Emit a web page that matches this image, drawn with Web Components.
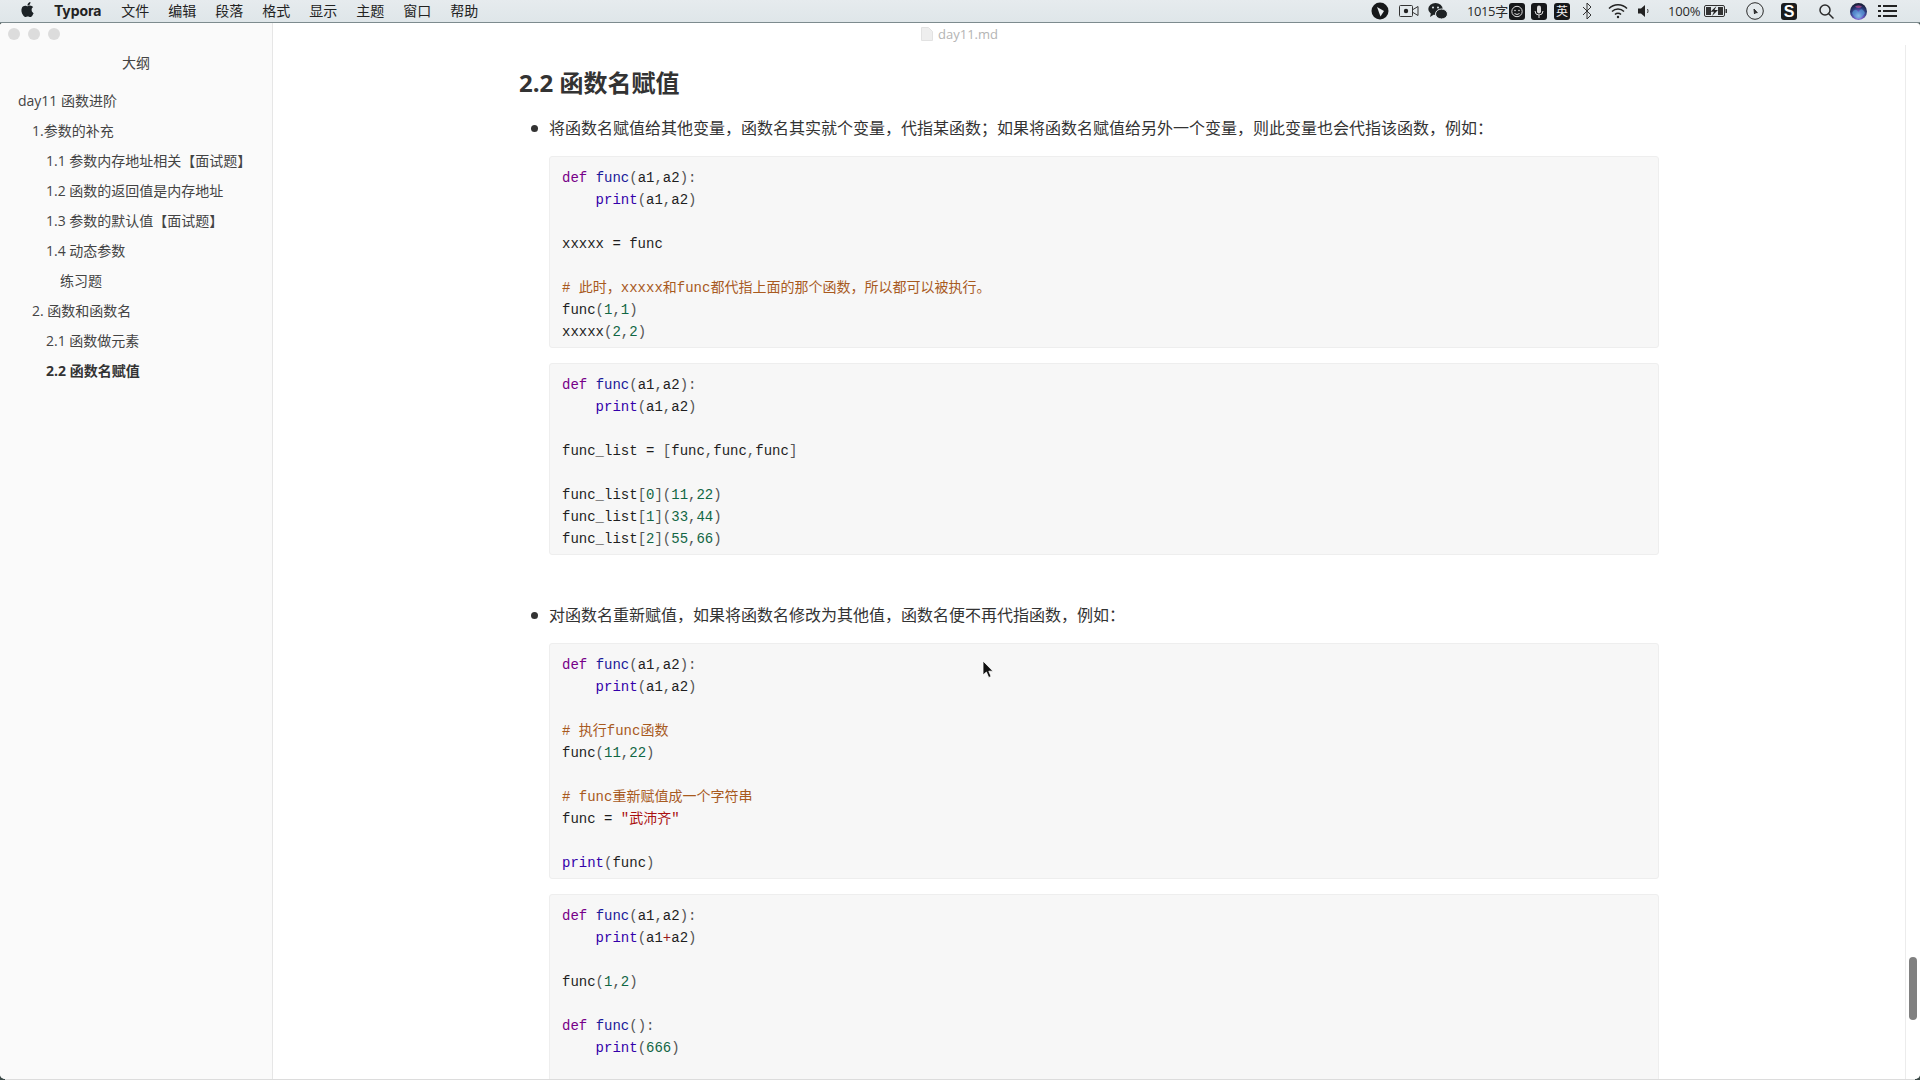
<!DOCTYPE html>
<html lang="zh">
<head>
<meta charset="utf-8">
<title>day11.md</title>
<style>
  html, body { margin: 0; height: 100%; overflow: hidden; background: #dcdcdc; }
  body { font-family: "Open Sans", "Noto Sans CJK SC", sans-serif; color: #333; }
</style>
</head>
<body>

<mac-desktop>
  <mac-menubar slot="bar"></mac-menubar>
  <typora-window slot="window">
    <outline-panel slot="side">
      <outline-item level="0">day11 函数进阶</outline-item>
      <outline-item level="1">1.参数的补充</outline-item>
      <outline-item level="2">1.1 参数内存地址相关【面试题】</outline-item>
      <outline-item level="2">1.2 函数的返回值是内存地址</outline-item>
      <outline-item level="2">1.3 参数的默认值【面试题】</outline-item>
      <outline-item level="2">1.4 动态参数</outline-item>
      <outline-item level="3">练习题</outline-item>
      <outline-item level="1">2. 函数和函数名</outline-item>
      <outline-item level="2">2.1 函数做元素</outline-item>
      <outline-item level="2" active>2.2 函数名赋值</outline-item>
    </outline-panel>

    <md-doc slot="doc" filename="day11.md">
      <md-heading>2.2 函数名赋值</md-heading>

      <md-bullet>
        将函数名赋值给其他变量，函数名其实就个变量，代指某函数；如果将函数名赋值给另外一个变量，则此变量也会代指该函数，例如：
        <code-block slot="blocks">def func(a1,a2):
    print(a1,a2)

xxxxx = func

# 此时，xxxxx和func都代指上面的那个函数，所以都可以被执行。
func(1,1)
xxxxx(2,2)</code-block>
        <code-block slot="blocks">def func(a1,a2):
    print(a1,a2)

func_list = [func,func,func]

func_list[0](11,22)
func_list[1](33,44)
func_list[2](55,66)</code-block>
      </md-bullet>

      <md-bullet class="second">
        对函数名重新赋值，如果将函数名修改为其他值，函数名便不再代指函数，例如：
        <code-block slot="blocks">def func(a1,a2):
    print(a1,a2)

# 执行func函数
func(11,22)

# func重新赋值成一个字符串
func = "武沛齐"

print(func)</code-block>
        <code-block slot="blocks">def func(a1,a2):
    print(a1+a2)

func(1,2)

def func():
    print(666)

</code-block>
      </md-bullet>
    </md-doc>
  </typora-window>
</mac-desktop>

<script>
// ---- page frame ----
class MacDesktop extends HTMLElement {
  constructor() {
    super();
    this.attachShadow({ mode: 'open' }).innerHTML = `
      <style>
        :host { display: flex; flex-direction: column; width: 1920px; height: 1080px; overflow: hidden;
          background: linear-gradient(to right, #3c4a48 0 5px, #dcdcdc 5px 1915px, #3c4a48 1915px); }
        ::slotted([slot="window"]) { flex: 1; min-height: 0; }
      </style>
      <slot name="bar"></slot>
      <slot name="window"></slot>`;
  }
}

class MacMenubar extends HTMLElement {
  constructor() {
    super();
    const menus = ['文件', '编辑', '段落', '格式', '显示', '主题', '窗口', '帮助'];
    this.attachShadow({ mode: 'open' }).innerHTML = `
      <style>
        :host { display: flex; align-items: center; height: 22px; flex: none; padding: 0 23px 0 20px;
          background: linear-gradient(#e6ebee, #dfe6e9); border-bottom: 1px solid #7d8b8e;
          font: 14px/22px "Open Sans", "Noto Sans CJK SC", sans-serif; color: #222; }
        .left { display: flex; align-items: center; gap: 19px; }
        .apple { width: 15px; height: 17px; margin-right: 1px; margin-top: -3px; fill: #1c2226; }
        b { font-family: "Inter", "Open Sans", sans-serif; font-weight: 700; font-size: 14px; letter-spacing: -.1px; margin-left: -1px; margin-right: 1px; }
        .right { margin-left: auto; display: flex; align-items: center; font-size: 13px; color: #2a2a2a; }
        .right svg { display: block; flex: none; }
        .box { width: 16px; height: 17px; background: #16181a; border-radius: 3px; color: #eee; display: flex;
          align-items: center; justify-content: center; font-size: 12px; line-height: 17px; }
        .sq { width: 16px; height: 17px; background: #1a1c1e; border-radius: 3px; color: #fff; display: flex;
          align-items: center; justify-content: center; font: 900 16px/17px "Liberation Sans", sans-serif; }
      </style>
      <div class="left">
        <svg class="apple" viewBox="0 0 24 24"><path d="M12.152 6.896c-.948 0-2.415-1.078-3.96-1.04-2.04.027-3.91 1.183-4.961 3.014-2.117 3.675-.546 9.103 1.519 12.09 1.013 1.454 2.208 3.09 3.792 3.039 1.52-.065 2.09-.987 3.935-.987 1.831 0 2.35.987 3.96.948 1.637-.026 2.676-1.48 3.676-2.948 1.156-1.688 1.636-3.325 1.662-3.415-.039-.013-3.182-1.221-3.22-4.857-.026-3.04 2.48-4.494 2.597-4.559-1.429-2.09-3.623-2.324-4.39-2.376-2-.156-3.675 1.09-4.61 1.09zM15.53 3.83c.843-1.012 1.4-2.427 1.245-3.83-1.207.052-2.662.805-3.532 1.818-.78.896-1.454 2.338-1.273 3.714 1.338.104 2.715-.688 3.559-1.701"/></svg>
        <b>Typora</b>
        ${menus.map(m => `<span>${m}</span>`).join('')}
      </div>
      <div class="right">
        <svg width="18" height="18" viewBox="0 0 18 18"><circle cx="9" cy="9" r="8.5" fill="#16181a"/><path d="M6 5l7 4-3.5 5.5z" fill="#e8ecee"/></svg>
        <svg style="margin-left:10px" width="20" height="16" viewBox="0 0 20 16" fill="none" stroke="#333"><rect x=".5" y="2.5" width="13" height="11" rx="1"/><circle cx="7" cy="8" r="2.2" fill="#222" stroke="none"/><path d="M14 6.5l5-3v9l-5-3"/></svg>
        <svg style="margin-left:9px" width="20" height="18" viewBox="0 0 20 18" fill="#1e2224"><ellipse cx="7.5" cy="7" rx="7.2" ry="6"/><path d="M3 11l-1 4 4-2.500z"/><ellipse cx="13.500" cy="12" rx="6" ry="5" stroke="#e3e9ec"/><circle cx="5" cy="5.500" r="1" fill="#e3e9ec"/><circle cx="10" cy="5.500" r="1" fill="#e3e9ec"/></svg>
        <span style="margin-left:19px;width:38px;letter-spacing:-.4px;white-space:nowrap">1015字</span>
        <svg style="margin-left:4px" width="16" height="17" viewBox="0 0 16 17"><rect width="16" height="17" rx="3" fill="#16181a"/><circle cx="8" cy="8.500" r="5.200" fill="none" stroke="#ddd"/><circle cx="6" cy="7.500" r=".8" fill="#ddd"/><circle cx="10" cy="7.500" r=".8" fill="#ddd"/><path d="M5.500 10.500q2.500 2 5 0" fill="none" stroke="#ddd"/></svg>
        <svg style="margin-left:6px" width="16" height="17" viewBox="0 0 16 17"><rect width="16" height="17" rx="3" fill="#16181a"/><rect x="6" y="2.500" width="4" height="8" rx="2" fill="#ddd"/><path d="M4 8a4 4 0 0 0 8 0M8 12v3" fill="none" stroke="#ddd"/></svg>
        <span class="box" style="margin-left:7px">英</span>
        <svg style="margin-left:12px" width="10" height="18" viewBox="0 0 10 18" fill="none" stroke="#333"><path d="M1 5l8 8-4 4V1l4 4-8 8"/></svg>
        <svg style="margin-left:16px" width="20" height="16" viewBox="0 0 20 16" fill="none" stroke="#222" stroke-width="1.500"><path d="M1 5.500a12.500 12.500 0 0 1 18 0M4 8.500a8.500 8.500 0 0 1 12 0M7 11.500a4.200 4.200 0 0 1 6 0"/><circle cx="10" cy="14" r="1.200" fill="#222" stroke="none"/></svg>
        <svg style="margin-left:10px" width="12" height="14" viewBox="0 0 12 14"><path d="M0 4.500h3L7 1v12L3 9.500H0z" fill="#222"/><path d="M9.500 5q1.200 2 0 4" fill="none" stroke="#444"/></svg>
        <span style="margin-left:18px;width:31px;white-space:nowrap;letter-spacing:-.2px">100%</span>
        <svg style="margin-left:5px" width="23" height="12" viewBox="0 0 23 12"><rect x=".5" y=".5" width="20" height="11" rx="1.500" fill="#e3e9ec" stroke="#333"/><path d="M2 2h5v8H2zM14 2h5v8h-5z" fill="#333"/><path d="M12.500 1L6.500 6.800h3.500L8 11l6-6h-3.500z" fill="#222"/><rect x="21.500" y="4" width="1.500" height="4" fill="#333"/></svg>
        <svg style="margin-left:19px" width="18" height="18" viewBox="0 0 18 18" fill="none" stroke="#2a2a2a"><circle cx="9" cy="9" r="8.300"/><path d="M8 7l.5 5 1.200-1.400 1.600.1z" fill="#222"/></svg>
        <span class="sq" style="margin-left:17px">S</span>
        <svg style="margin-left:22px" width="15" height="15" viewBox="0 0 15 15" fill="none" stroke="#2a2a2a" stroke-width="1.500"><circle cx="6" cy="6" r="5"/><path d="M9.500 9.500l5 5"/></svg>
        <svg style="margin-left:16px" width="17" height="17" viewBox="0 0 17 17">
          <defs><radialGradient id="siri" cx=".5" cy=".75" r=".7"><stop offset="0" stop-color="#d8d4f0"/><stop offset=".35" stop-color="#6f5fc8"/><stop offset=".7" stop-color="#283a78"/><stop offset="1" stop-color="#1a1d38"/></radialGradient></defs>
          <circle cx="8.500" cy="8.500" r="8.500" fill="url(#siri)"/><path d="M2 10q3-6 6.500-1 3-6 6.500 1-3 5-6.500 5.500Q4 15 2 10z" fill="#4fa8d8" opacity=".6"/><path d="M5 3.500q3.500-2 7 0-3.500 3-7 0z" fill="#c04a90" opacity=".7"/>
        </svg>
        <svg style="margin-left:11px" width="19" height="14" viewBox="0 0 19 14" fill="#222"><rect x="0" y="1" width="3" height="2"/><rect x="0" y="6" width="3" height="2"/><rect x="0" y="11" width="3" height="2"/><rect x="5" y="1" width="14" height="2"/><rect x="5" y="6" width="14" height="2"/><rect x="5" y="11" width="14" height="2"/></svg>
      </div>`;
  }
}

class TyporaWindow extends HTMLElement {
  constructor() {
    super();
    this.attachShadow({ mode: 'open' }).innerHTML = `
      <style>
        :host { display: flex; background: #fff; border-radius: 3px 3px 5px 5px; overflow: hidden; position: relative;
          margin-bottom: 1px; }
        ::slotted([slot="side"]) { flex: none; }
        ::slotted([slot="doc"]) { flex: 1; min-width: 0; }
      </style>
      <slot name="side"></slot>
      <slot name="doc"></slot>`;
  }
}

// ---- outline ----
class OutlinePanel extends HTMLElement {
  constructor() {
    super();
    this.attachShadow({ mode: 'open' }).innerHTML = `
      <style>
        :host { display: block; width: 272px; box-sizing: content-box; background: #fafafa;
          border-right: 1px solid #e6e6e6; font: 14px/30px "Open Sans", "Noto Sans CJK SC", sans-serif; color: #444; }
        .lights { display: flex; gap: 8px; padding: 5px 0 0 8px; height: 12px; }
        .lights i { width: 12px; height: 12px; border-radius: 50%; background: #dcdcdc; }
        .title { text-align: center; height: 30px; margin-top: 8px; margin-bottom: 8px; color: #444; }
      </style>
      <div class="lights"><i></i><i></i><i></i></div>
      <div class="title">大纲</div>
      <slot></slot>`;
  }
}

class OutlineItem extends HTMLElement {
  constructor() {
    super();
    this.attachShadow({ mode: 'open' }).innerHTML = `
      <style>
        :host { display: block; height: 30px; white-space: nowrap; padding-left: calc(18px + 14px * var(--lv, 0)); }
        :host([active]) { font-weight: 700; color: #333; }
      </style>
      <slot></slot>`;
  }
  connectedCallback() {
    this.style.setProperty('--lv', this.getAttribute('level') || 0);
  }
}

// ---- document ----
class MdDoc extends HTMLElement {
  constructor() {
    super();
    this.attachShadow({ mode: 'open' }).innerHTML = `
      <style>
        :host { display: flex; flex-direction: column; position: relative; overflow: hidden;
          font: 16px/26px "Open Sans", "Noto Sans CJK SC", sans-serif; color: #333; }
        /* title is centred on the whole window, not on the editor */
        .name { flex: none; height: 22px; display: flex; align-items: center; justify-content: center; gap: 5px;
          font-size: 13px; color: #b4b4b4; padding-right: 274px; }
        .name svg { display: block; }
        .view { flex: 1; min-height: 0; display: flex; overflow: hidden; }
        .page { flex: 1; min-width: 0; display: flex; justify-content: center; overflow: hidden; }
        .col { width: 1140px; }
        .track { flex: none; width: 14px; border-left: 1px solid #ececec; background: #fff; display: flex;
          flex-direction: column; align-items: center; }
        .thumb { width: 8px; height: 63px; border-radius: 4px; background: #808080; margin-top: 912px; }
        .cursor { position: absolute; left: 709px; top: 637px; }
      </style>
      <div class="name">
        <svg width="12" height="14" viewBox="0 0 12 14" fill="#eeeeee" stroke="#e2e2e2"><path d="M.5.500h7l4 4v9H.5z"/></svg>
        <span></span>
      </div>
      <div class="view">
        <div class="page"><div class="col"><slot></slot></div></div>
        <div class="track"><div class="thumb"></div></div>
      </div>
      <svg class="cursor" width="13" height="19" viewBox="0 0 13 19"><path d="M1 1v14l3.400-3 2.300 5.500 2.400-1-2.300-5.300H11z" fill="#111" stroke="#fff" stroke-width=".8"/></svg>`;
  }
  connectedCallback() {
    this.shadowRoot.querySelector('.name span').textContent = this.getAttribute('filename');
  }
}

class MdHeading extends HTMLElement {
  constructor() {
    super();
    this.attachShadow({ mode: 'open' }).innerHTML = `
      <style>
        :host { display: block; font-size: 24px; line-height: 36px; font-weight: 700; color: #333; margin: 0 0 14px; padding-top: 20px; }
      </style>
      <slot></slot>`;
  }
}

class MdBullet extends HTMLElement {
  constructor() {
    super();
    this.attachShadow({ mode: 'open' }).innerHTML = `
      <style>
        :host { display: flex; margin-bottom: 47px; }
        .mark { flex: none; width: 18px; height: 26px; margin-left: 12px; display: flex; align-items: center; }
        .mark i { width: 7px; height: 7px; border-radius: 50%; background: #333; }
        .body { flex: 1; min-width: 0; display: flex; flex-direction: column; gap: 15px; }
      </style>
      <div class="mark"><i></i></div>
      <div class="body">
        <div><slot></slot></div>
        <slot name="blocks"></slot>
      </div>`;
  }
}

// tiny python highlighter, just enough for the snippets in this page
class CodeBlock extends HTMLElement {
  constructor() {
    super();
    this.attachShadow({ mode: 'open' }).innerHTML = `
      <style>
        :host { display: block; box-sizing: border-box; background: #f7f7f7; border: 1px solid #eeeeee; border-radius: 3px;
          padding: 10px 12px 4px;
          font: 14px/22px "Liberation Mono", "Noto Sans CJK SC", monospace; color: #1e1e1e; }
        .l { height: 22px; white-space: pre; }
        .k { color: #770088; } .d { color: #1a1a9a; } .b { color: #3300aa; }
        .n { color: #116644; } .s { color: #aa1111; } .c { color: #a85a1e; }
        .o { color: #981a1a; } .p { color: #555; }
      </style>
      <div class="code"></div>`;
  }

  connectedCallback() {
    const src = this.textContent;
    this.shadowRoot.querySelector('.code').innerHTML =
      src.split('\n').map(l => `<div class="l">${this.highlight(l)}</div>`).join('');
  }

  highlight(line) {
    const re = /(#.*$)|("[^"]*")|\b(def)\b(\s+)(\w+)|\b(print)\b|\b(\d+)\b|(\+)|([()\[\],:])/g;
    return line.replace(re, (m, c, s, k, sp, d, b, n, o, p) => {
      if (c) return `<span class="c">${c}</span>`;
      if (s) return `<span class="s">${s}</span>`;
      if (k) return `<span class="k">${k}</span>${sp}<span class="d">${d}</span>`;
      if (b) return `<span class="b">${b}</span>`;
      if (n) return `<span class="n">${n}</span>`;
      if (o) return `<span class="o">${o}</span>`;
      return `<span class="p">${p}</span>`;
    });
  }
}

customElements.define('mac-desktop', MacDesktop);
customElements.define('mac-menubar', MacMenubar);
customElements.define('typora-window', TyporaWindow);
customElements.define('outline-panel', OutlinePanel);
customElements.define('outline-item', OutlineItem);
customElements.define('md-doc', MdDoc);
customElements.define('md-heading', MdHeading);
customElements.define('md-bullet', MdBullet);
customElements.define('code-block', CodeBlock);
</script>
</body>
</html>
